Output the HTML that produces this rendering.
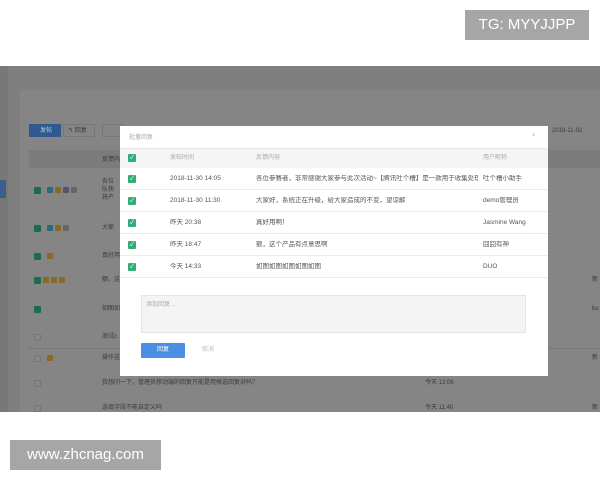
<!DOCTYPE html>
<html><head><meta charset="utf-8"><style>
*{margin:0;padding:0;box-sizing:border-box}
body{width:600px;height:480px;background:#fff;position:relative;overflow:hidden;font-family:"Liberation Sans","Noto Sans CJK SC",sans-serif;}
.a{position:absolute}
.ov{left:0;top:66px;width:600px;height:346px;background:#7f7f7f}
.side{left:0;top:66px;width:8px;height:346px;background:#787878}
.panel{left:20px;top:90px;width:580px;height:322px;background:#858585}
.t{font-size:6px;line-height:8px;color:#3a3a3a;white-space:nowrap}
.cb{width:7px;height:7px;background:#1d6b4a;border-radius:1px}
.cbe{width:7px;height:7px;border:1px solid #777;border-radius:1px}
.tg{width:6px;height:6px;border-radius:1px}
.modal{left:120px;top:126px;width:428px;height:250px;background:#fff}
.mh{font-size:6px;line-height:8px;color:#aaa;white-space:nowrap}
.gcb{width:8px;height:8px;background:#2fae7a;border-radius:1px;color:#fff;font-size:6px;line-height:8px;text-align:center}
.mt{font-size:6.5px;line-height:8px;height:8px;color:#555;white-space:nowrap;overflow:hidden}
.row{left:0;width:428px;height:22px;border-bottom:1px solid #eee}
</style></head><body>
<div class="a" style="left:465px;top:10px;width:124px;height:30px;background:#a6a6a6;color:#fff;font-size:15px;line-height:30px;text-align:center">TG: MYYJJPP</div>

<div class="a ov"></div>
<div class="a side"></div>
<div class="a" style="left:0;top:180px;width:6px;height:18px;background:#3a5f8c"></div>
<div class="a panel"></div>
<div class="a" style="left:29px;top:124px;width:32px;height:13px;background:#2f5a8f"></div>
<div class="a t" style="left:40px;top:127px;color:#bcd">发帖</div>
<div class="a" style="left:63px;top:124px;width:32px;height:13px;border:1px solid #777"></div>
<div class="a t" style="left:68px;top:127px">↰ 回复</div>
<div class="a" style="left:102px;top:124px;width:20px;height:13px;border:1px solid #777"></div>
<div class="a" style="left:29px;top:150px;width:571px;height:18px;background:#7b7b7b"></div>
<div class="a cbe" style="left:34px;top:156px"></div>
<div class="a t" style="left:102px;top:156px">反馈内</div>

<div class="a cb" style="left:34px;top:187px"></div>
<div class="a tg" style="left:47px;top:187px;background:#2a6a7a"></div><div class="a tg" style="left:55px;top:187px;background:#8a6a20"></div><div class="a tg" style="left:63px;top:187px;background:#5a5070"></div><div class="a tg" style="left:71px;top:187px;background:#666"></div>
<div class="a t" style="left:102px;top:178px">各位<br>队快<br>将产</div>
<div class="a cb" style="left:34px;top:225px"></div>
<div class="a tg" style="left:47px;top:225px;background:#2a6a7a"></div><div class="a tg" style="left:55px;top:225px;background:#8a6a20"></div><div class="a tg" style="left:63px;top:225px;background:#666"></div>
<div class="a t" style="left:102px;top:224px">大家</div>
<div class="a cb" style="left:34px;top:253px"></div><div class="a tg" style="left:47px;top:253px;background:#8a6a20"></div>
<div class="a t" style="left:102px;top:252px">真好用</div>
<div class="a cb" style="left:34px;top:277px"></div>
<div class="a tg" style="left:43px;top:277px;background:#8a6a20"></div><div class="a tg" style="left:51px;top:277px;background:#8a6a20"></div><div class="a tg" style="left:59px;top:277px;background:#8a6a20"></div>
<div class="a t" style="left:102px;top:276px">额，这</div>
<div class="a cb" style="left:34px;top:306px"></div>
<div class="a t" style="left:102px;top:305px">如图如</div>
<div class="a cbe" style="left:34px;top:334px"></div>
<div class="a t" style="left:102px;top:333px">测试c</div>
<div class="a" style="left:29px;top:348px;width:571px;height:1px;background:#777"></div>
<div class="a cbe" style="left:34px;top:355px"></div><div class="a tg" style="left:47px;top:355px;background:#8a6a20"></div>
<div class="a t" style="left:102px;top:354px">操作这</div>
<div class="a cbe" style="left:34px;top:380px"></div>
<div class="a t" style="left:102px;top:379px">我想问一下，管理员移动端的回复只能是用候选回复对吗？</div>
<div class="a t" style="left:425px;top:379px">今天 13:06</div>
<div class="a cbe" style="left:34px;top:405px"></div>
<div class="a t" style="left:102px;top:404px">选填字段不能自定义吗</div>
<div class="a t" style="left:425px;top:404px">今天 11:40</div>
<div class="a t" style="left:552px;top:127px">2018-11-02</div>
<div class="a t" style="left:592px;top:276px">新</div>
<div class="a t" style="left:592px;top:305px">bu</div>
<div class="a t" style="left:592px;top:354px">新</div>
<div class="a t" style="left:592px;top:404px">新</div>

<div class="a modal">
 <div class="a mh" style="left:9px;top:8px">批量回复</div>
 <div class="a mh" style="left:412px;top:6px">×</div>
 <div class="a" style="left:0;top:22px;width:428px;height:20px;background:#f5f5f5;border-top:1px solid #e6e6e6"></div>
 <div class="a gcb" style="left:8px;top:28px">✓</div>
 <div class="a mh" style="left:50px;top:28px">发帖时间</div>
 <div class="a mh" style="left:136px;top:28px">反馈内容</div>
 <div class="a mh" style="left:363px;top:28px">用户昵称</div>
 <div class="a row" style="top:42px"><div class="a gcb" style="left:8px;top:7px">✓</div><div class="a mt" style="left:50px;top:7px">2018-11-30 14:05</div><div class="a mt" style="left:136px;top:7px;width:222px">各位参赛者，非常感谢大家参与此次活动~【腾讯吐个槽】是一款用于收集处理...</div><div class="a mt" style="left:363px;top:7px">吐个槽小助手</div></div>
 <div class="a row" style="top:64px"><div class="a gcb" style="left:8px;top:7px">✓</div><div class="a mt" style="left:50px;top:7px">2018-11-30 11:30</div><div class="a mt" style="left:136px;top:7px">大家好，系统正在升级，给大家造成的不变，望谅解</div><div class="a mt" style="left:363px;top:7px">demo管理员</div></div>
 <div class="a row" style="top:86px"><div class="a gcb" style="left:8px;top:7px">✓</div><div class="a mt" style="left:50px;top:7px">昨天 20:38</div><div class="a mt" style="left:136px;top:7px">真好用啊！</div><div class="a mt" style="left:363px;top:7px">Jasmine Wang</div></div>
 <div class="a row" style="top:108px"><div class="a gcb" style="left:8px;top:7px">✓</div><div class="a mt" style="left:50px;top:7px">昨天 18:47</div><div class="a mt" style="left:136px;top:7px">额，这个产品有点意思啊</div><div class="a mt" style="left:363px;top:7px">囧囧有神</div></div>
 <div class="a row" style="top:130px"><div class="a gcb" style="left:8px;top:7px">✓</div><div class="a mt" style="left:50px;top:7px">今天 14:33</div><div class="a mt" style="left:136px;top:7px">如图如图如图如图如图</div><div class="a mt" style="left:363px;top:7px">DUO</div></div>
 <div class="a" style="left:21px;top:169px;width:385px;height:38px;background:#f4f4f4;border:1px solid #e4e4e4"></div>
 <div class="a mh" style="left:26px;top:175px">添加回复...</div>
 <div class="a" style="left:21px;top:217px;width:44px;height:15px;background:#4a90e2;border-radius:1px;color:#fff;font-size:6px;line-height:15px;text-align:center">回复</div>
 <div class="a mh" style="left:82px;top:220px;color:#bbb">取消</div>
</div>

<div class="a" style="left:10px;top:440px;width:151px;height:30px;background:#a6a6a6;color:#fff;font-size:15px;line-height:30px;text-align:center">www.zhcnag.com</div>
</body></html>
